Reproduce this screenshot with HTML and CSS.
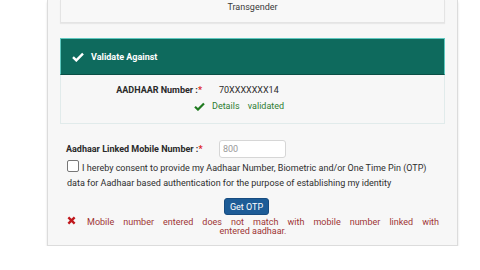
FILE: index.html
```html
<!DOCTYPE html>
<html>
<head>
<meta charset="utf-8">
<link rel="stylesheet" href="styles.css">
</head>
<body>
<div class="panel">
  <div class="top-card"><span>Transgender</span></div>

  <div class="validate">
    <div class="v-head">
      <svg class="v-check" viewBox="0 0 12 10" width="12" height="10"><path d="M1 5.2 L4.3 8.4 L11 1.6" fill="none" stroke="#fff" stroke-width="2.4"/></svg>
      <span>Validate Against</span>
    </div>
    <div class="v-body">
      <div class="row">
        <div class="lbl">AADHAAR Number :<span class="req">*</span></div>
        <div class="val">70XXXXXXX14</div>
      </div>
      <div class="row">
        <div class="lbl"><svg class="ok" viewBox="0 0 12 10" width="11" height="9"><path d="M1 5.2 L4.3 8.4 L11 1.6" fill="none" stroke="#1f7a1f" stroke-width="2.4"/></svg></div>
        <div class="val ok-text">Details validated</div>
      </div>
    </div>
  </div>

  <div class="mobile">
    <div class="m-row">
      <div class="m-lbl">Aadhaar Linked Mobile Number :<span class="req">*</span></div>
      <div class="m-input">800</div>
    </div>
    <div class="consent">
      <span class="cb"></span>I hereby consent to provide my Aadhaar Number, Biometric and/or One Time Pin (OTP)<br>data for Aadhaar based authentication for the purpose of establishing my identity
    </div>
    <div class="btn-row"><button class="otp">Get OTP</button></div>
    <div class="err">
      <span class="err-l1"><svg class="x" viewBox="0 0 10 10" width="9" height="9"><path d="M1.5 1.5 L8.5 8.5 M8.5 1.5 L1.5 8.5" stroke="#c0181c" stroke-width="2.6"/></svg> Mobile number entered does not match with mobile number linked with</span>
      <span class="err-l2">entered aadhaar.</span>
    </div>
  </div>
</div>
</body>
</html>
```

FILE: styles.css
```css
html, body {
  margin: 0;
  padding: 0;
  background: #fff;
}
body {
  font-family: Roboto, "Liberation Sans", sans-serif;
  font-size: 9px;
  color: #333;
}
.panel {
  margin-left: 47px;
  width: 411px;
  height: 246px;
  box-sizing: border-box;
  background: #f7f7f7;
  border: 1px solid #dcdcdc;
  border-top: none;
  box-shadow: 0 2px 2px rgba(0,0,0,0.12);
  padding: 0 12px 0 12px;
}
.top-card {
  height: 23px;
  box-sizing: border-box;
  border: 1px solid #e4e4e4;
  border-top: none;
  background: #f8f8f8;
  box-shadow: 0 1px 1px rgba(0,0,0,0.06);
  text-align: center;
  line-height: 15px;
  color: #3a3a3a;
}
.validate {
  margin-top: 15px;
}
.v-head {
  height: 37px;
  box-sizing: border-box;
  background: #0e6a5d;
  border: 1px solid #5fc9c0;
  border-bottom-color: #0a4f45;
  color: #fff;
  font-weight: bold;
  display: flex;
  align-items: center;
  padding-left: 11px;
  gap: 7px;
}
.v-check { display: block; }
.v-body {
  height: 49px;
  box-sizing: border-box;
  border: 1px solid #e1ebeb;
  border-top: none;
  padding-top: 7px;
}
.row {
  display: flex;
  height: 16px;
  align-items: center;
}
.lbl {
  width: 141px;
  text-align: right;
  font-weight: bold;
  color: #2a2a2a;
}
.req { color: #d22; }
.val {
  margin-left: 17px;
  color: #2a2a2a;
}
.ok {
  display: inline-block;
  vertical-align: middle;
  margin-right: -3px;
}
.ok-text {
  margin-left: 10px;
  color: #2e7d32;
  word-spacing: 6px;
}
.mobile {
  padding-top: 16px;
  padding-left: 6px;
}
.m-row {
  display: flex;
  align-items: center;
  height: 18px;
}
.m-lbl {
  width: 153px;
  font-weight: bold;
  color: #2a2a2a;
}
.m-input {
  width: 67px;
  height: 18px;
  box-sizing: border-box;
  border: 1px solid #d6d6d6;
  border-radius: 3px;
  background: #fff;
  color: #999;
  padding-left: 3px;
  line-height: 16px;
}
.consent {
  margin-top: 2px;
  line-height: 15px;
  color: #2e2e2e;
  padding-left: 1px;
}
.cb {
  display: inline-block;
  width: 10px;
  height: 10px;
  border: 1px solid #777;
  border-radius: 2px;
  background: #fff;
  vertical-align: -1px;
  margin-right: 3px;
}
.btn-row {
  margin-top: 7px;
  padding-left: 158px;
}
.otp {
  width: 45px;
  height: 17px;
  padding: 0;
  border: 1px solid #174c80;
  border-radius: 3px;
  background: #1d5c97;
  color: #fff;
  font-family: Roboto, "Liberation Sans", sans-serif;
  font-size: 9px;
  display: block;
}
.err {
  margin-top: 1px;
  width: 372px;
  color: #9e3535;
  line-height: 10px;
  padding-left: 1px;
}
.err-l1 {
  display: block;
  text-align: justify;
  text-align-last: justify;
}
.err-l2 {
  display: block;
  text-align: center;
  margin-top: -1px;
}
.x {
  display: inline-block;
  vertical-align: 0px;
  margin-right: 2px;
}
```
